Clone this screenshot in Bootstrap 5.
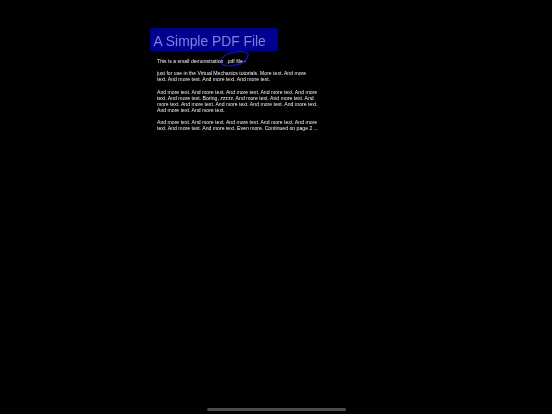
<!DOCTYPE html>
<html lang="en">
<head>
<meta charset="utf-8">
<title>A Simple PDF File</title>
<link rel="stylesheet" href="https://cdn.jsdelivr.net/npm/bootstrap@5.3.0/dist/css/bootstrap.min.css">
<style>
html,body{background:#000;height:414px;overflow:hidden}
.screen{width:552px;height:414px;background:#000;position:relative;font-family:"Liberation Sans",Arial,sans-serif}
.sheet{width:172px;margin-left:150px;padding-top:28px}
.pdf-title{width:128px;height:23px;background:#00008f;color:#8282dc;font-size:13.85px;line-height:26px;padding-left:3.5px;margin:0;font-weight:400;font-family:inherit;white-space:nowrap;filter:blur(.3px)}
.pdf-body{position:relative;z-index:1;padding-left:7px;color:#f0f0f0;font-size:5.14px;line-height:6.05px;filter:blur(.2px)}
.pdf-body p{margin:0;white-space:nowrap}
.pdf-first{margin-top:7px!important}
.pdf-gap{margin-top:6.3px!important}
.scribble{position:absolute;left:215px;top:46px;width:40px;height:24px;overflow:visible}
.home-bar{position:absolute;left:207px;top:408px;width:139px;height:3px;background:#4d4d4d;border-radius:1.5px}
</style>
</head>
<body>
<div class="screen">
  <div class="sheet">
    <h1 class="pdf-title">A Simple PDF File</h1>
    <div class="pdf-body">
      <p class="pdf-first">This is a small demonstration&nbsp; .pdf file -</p>
      <p class="pdf-gap">just for use in the Virtual Mechanics tutorials. More text. And more<br>text. And more text. And more text. And more text.</p>
      <p class="pdf-gap">And more text. And more text. And more text. And more text. And more<br>text. And more text. Boring, zzzzz. And more text. And more text. And<br>more text. And more text. And more text. And more text. And more text.<br>And more text. And more text.</p>
      <p class="pdf-gap">And more text. And more text. And more text. And more text. And more<br>text. And more text. And more text. Even more. Continued on page 2 ...</p>
    </div>
  </div>
  <svg class="scribble" viewBox="0 0 40 24" fill="none"><path d="M6 17C6 11 12 7 21 6C28 5 34 6 33 10C32 14 28 18 20 19C14 20 9 20 7 18" stroke="#10109c" stroke-width="1.5" stroke-linecap="round"/></svg>
  <div class="home-bar"></div>
</div>
<script src="https://cdn.jsdelivr.net/npm/bootstrap@5.3.0/dist/js/bootstrap.bundle.min.js"></script>
</body>
</html>
